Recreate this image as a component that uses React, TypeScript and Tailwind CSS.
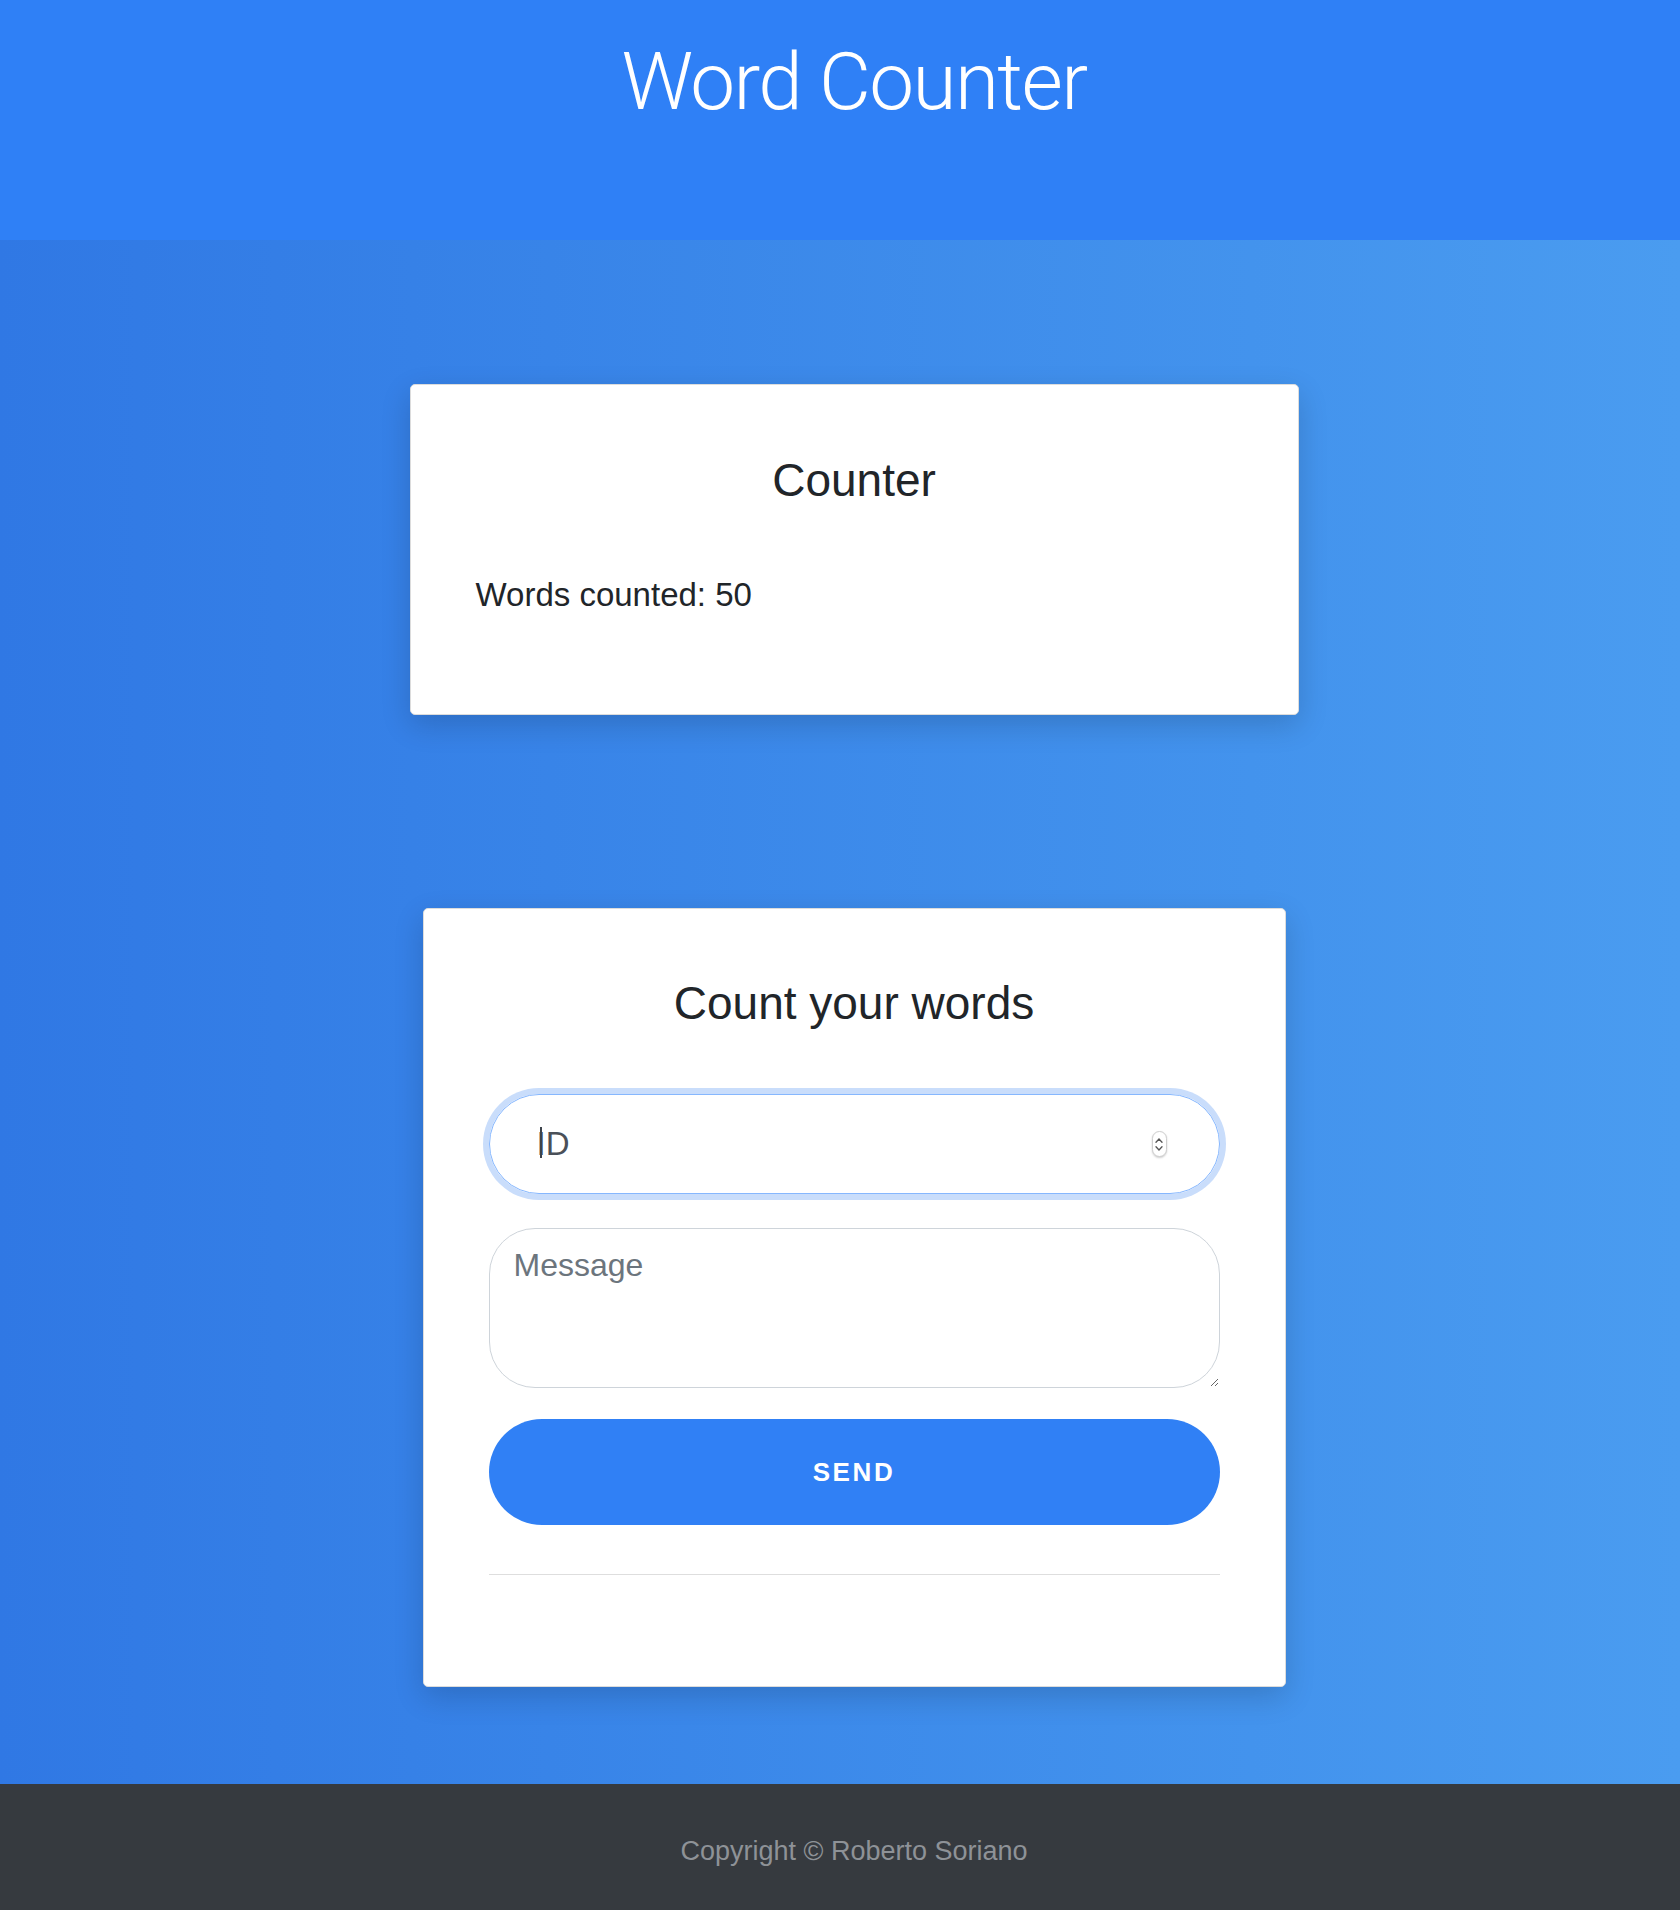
import { useState } from 'react';

function Spinner() {
  return (
    <div className="absolute right-[53px] top-[37px] w-[15px] h-[26px] rounded-full border border-[#cfcfcf] bg-white shadow-[0_1px_2px_rgba(0,0,0,0.2)] flex flex-col items-center justify-center gap-[3px]">
      <svg width="8" height="5" viewBox="0 0 8 5" fill="none">
        <path d="M1 4.2 L4 1 L7 4.2" stroke="#555" strokeWidth="1.3" strokeLinecap="round" />
      </svg>
      <svg width="8" height="5" viewBox="0 0 8 5" fill="none">
        <path d="M1 0.8 L4 4 L7 0.8" stroke="#555" strokeWidth="1.3" strokeLinecap="round" />
      </svg>
    </div>
  );
}

export default function App() {
  const [id, setId] = useState('');
  const [message, setMessage] = useState('');

  return (
    <div className="min-h-screen flex flex-col font-['Liberation_Sans',Arial,sans-serif] text-[#212529]">
      {/* header */}
      <header className="h-[240px] bg-[#2f80f6] flex justify-center pl-[28px] pt-[34px]">
        <h1 className="text-[80px] leading-[96px] font-light tracking-[-1.6px] text-white font-['Roboto','Liberation_Sans',sans-serif]">
          Word Counter
        </h1>
      </header>

      {/* main area with the two cards */}
      <main className="h-[1544px] bg-gradient-to-r from-[#3078e4] to-[#4a9cf0] flex flex-col items-center pl-[28px] pt-[144px]">
        <section className="w-[889px] h-[331px] bg-white rounded-[5px] border border-[#dcdcdc] shadow-[0_10px_30px_rgba(0,0,0,0.16)] px-[65px] pt-[67px]">
          <h3 className="text-center text-[46px] leading-[56px] font-normal">Counter</h3>
          <p className="mt-[67px] text-[33px] leading-[40px]">Words counted: 50</p>
        </section>

        <section className="mt-[193px] w-[863px] h-[779px] bg-white rounded-[5px] border border-[#dcdcdc] shadow-[0_10px_30px_rgba(0,0,0,0.16)] px-[65px] pt-[66px]">
          <h3 className="text-center text-[46px] leading-[56px] font-normal">Count your words</h3>

          <form className="mt-[63px] flex flex-col" onSubmit={(e) => e.preventDefault()}>
            <div className="relative">
              <input
                type="text"
                value={id}
                onChange={(e) => setId(e.target.value)}
                placeholder="ID"
                className="w-full h-[100px] rounded-full border border-[#86b7fe] shadow-[0_0_0_6px_#c9ddfb] pl-[47px] pr-[80px] text-[33px] text-[#4a5058] placeholder:text-[#4a5058] outline-none"
              />
              {/* caret as in the focused field */}
              {id === '' && <span className="absolute left-[51px] top-[33px] w-[2px] h-[31px] bg-[#3d434b]" />}
              <Spinner />
            </div>

            <textarea
              value={message}
              onChange={(e) => setMessage(e.target.value)}
              placeholder="Message"
              className="mt-[34px] h-[160px] rounded-[46px] border border-[#ced4da] pl-[24px] pt-[16px] text-[32px] leading-[40px] placeholder:text-[#6c757d] outline-none"
            />

            <button
              type="submit"
              className="mt-[31px] h-[106px] w-full rounded-full bg-[#3080f5] text-white font-bold text-[26px] tracking-[0.1em]"
            >
              SEND
            </button>

            <div className="mt-[49px] h-px bg-[#dedede]" />
          </form>
        </section>
      </main>

      {/* footer */}
      <footer className="h-[126px] bg-[#363a3f] flex justify-center pl-[28px] pt-[51px]">
        <p className="text-[27px] leading-[32px] text-[#8e9297]">Copyright © Roberto Soriano</p>
      </footer>
    </div>
  );
}
